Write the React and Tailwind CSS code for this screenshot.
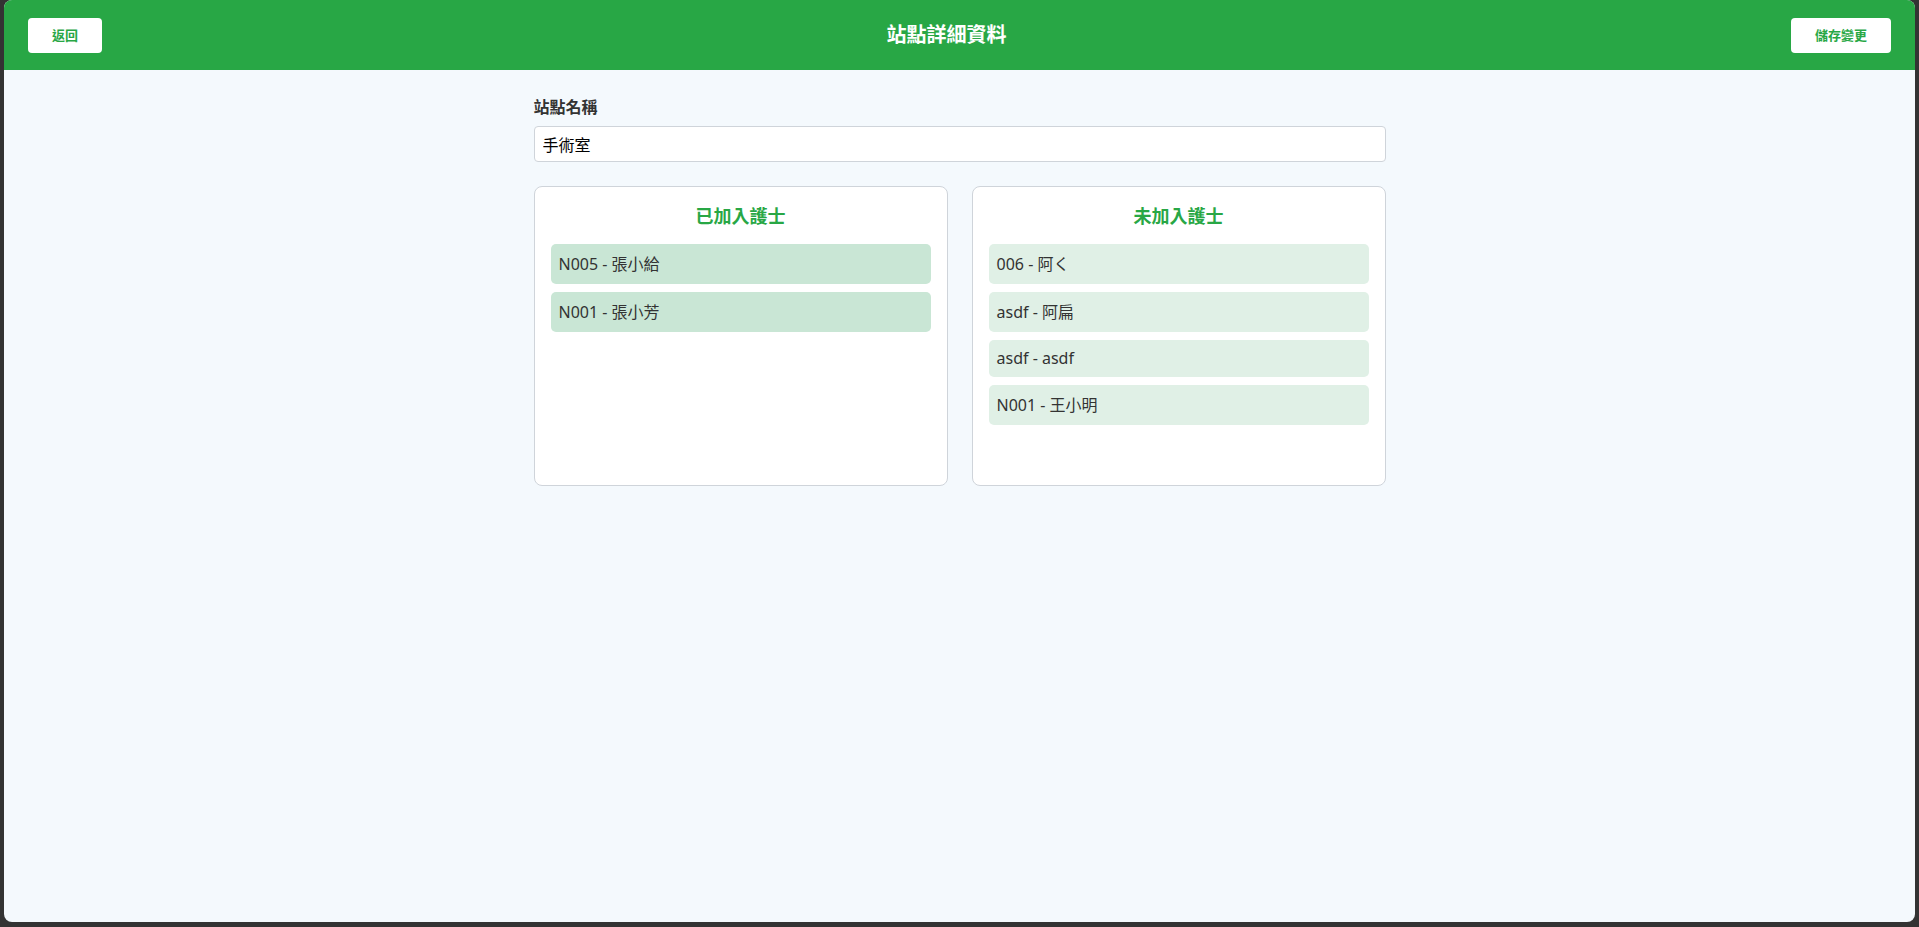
import React, { useState } from "react";

const joined = [
  { id: "N005", name: "張小給" },
  { id: "N001", name: "張小芳" },
];

const notJoined = [
  { id: "006", name: "阿く" },
  { id: "asdf", name: "阿扁" },
  { id: "asdf", name: "asdf" },
  { id: "N001", name: "王小明" },
];

const hasCjk = (s) => /[^\x00-\x7f]/.test(s);

const NurseCard = ({ title, list, itemBg }) => {
  return (
    <div className="bg-white border border-[#cfd4da] rounded-lg p-4 h-[300px]">
      <h3 className="text-center text-[18px] leading-[27px] font-bold text-[#28a745] mb-[14px]">
        {title}
      </h3>
      <div className="flex flex-col gap-2">
        {list.map((n, i) => (
          <div
            key={i}
            className={`${itemBg} rounded-[5px] px-2 py-2 text-[16px] text-[#333] cursor-pointer
              ${hasCjk(n.name) ? "leading-[24px]" : "leading-[21px]"}`}
          >
            {n.id} - {n.name}
          </div>
        ))}
      </div>
    </div>
  );
};

export default function App() {
  const [stationName, setStationName] = useState("手術室");

  return (
    <div
      className="h-screen w-full bg-[#333333] pl-[4px] pr-[4px] pb-[5px]"
      style={{ fontFamily: '"Noto Sans", "Noto Sans CJK TC", sans-serif' }}
    >
      <div className="h-full bg-[#f4f9fd] rounded-[8px] overflow-hidden flex flex-col">
        <header className="bg-[#28a745] h-[70px] px-6 flex items-center justify-between shrink-0">
          <button className="bg-white text-[#28a745] font-bold text-[13px] leading-[19px] px-6 py-2 rounded-[4px]">
            返回
          </button>
          <h1 className="text-white font-bold text-[20px] leading-[28px]">站點詳細資料</h1>
          <button className="bg-white text-[#28a745] font-bold text-[13px] leading-[19px] px-6 py-2 rounded-[4px]">
            儲存變更
          </button>
        </header>

        <main className="w-[852px] mx-auto pt-[26px]">
          <label className="block text-[16px] leading-[23px] font-bold text-[#333] mb-[7px]">
            站點名稱
          </label>
          <input
            value={stationName}
            onChange={(e) => setStationName(e.target.value)}
            className="w-full h-[36px] bg-white border border-[#cfd4da] rounded-[4px] px-2 text-[16px] text-black outline-none"
          />

          <div className="grid grid-cols-2 gap-6 mt-[24px]">
            <NurseCard title="已加入護士" list={joined} itemBg="bg-[#c9e6d5]" />
            <NurseCard title="未加入護士" list={notJoined} itemBg="bg-[#e0f0e6]" />
          </div>
        </main>
      </div>
    </div>
  );
}
